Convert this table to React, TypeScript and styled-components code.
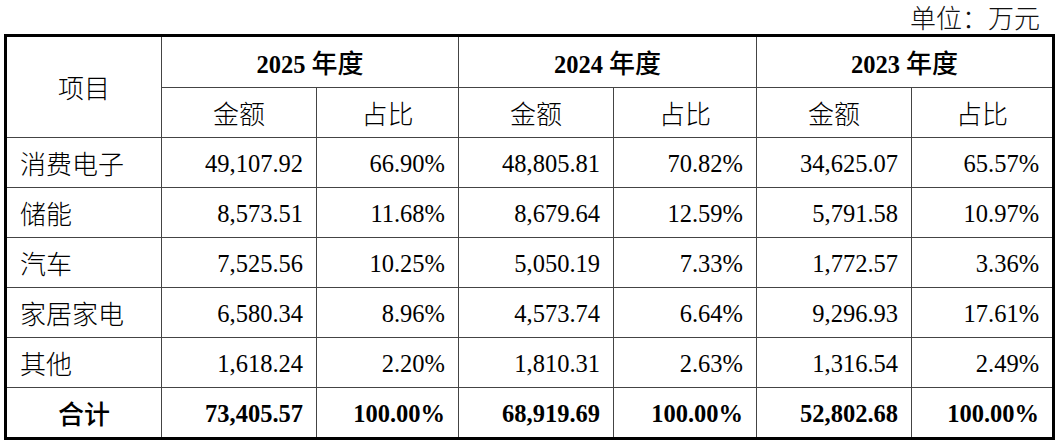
import React from "react";
import styled, { createGlobalStyle } from "styled-components";

const GlobalStyle = createGlobalStyle`
  html, body { margin: 0; padding: 0; background: #fff; }
  body { font-family: "Liberation Serif", "Noto Sans CJK SC", serif; color: #000; }
`;

const Page = styled.div`
  width: 1059px;
  display: flex;
  flex-direction: column;
`;

const Unit = styled.div`
  height: 34px;
  line-height: 34px;
  text-align: right;
  padding-right: 19px;
  font-size: 25px;
  color: #111;
`;

const Table = styled.table`
  margin-left: 4px;
  width: 1051px;
  table-layout: fixed;
  border-collapse: collapse;
  border: 3px solid #000;
  font-size: 24.5px;
  line-height: 30px;
`;

const Row = styled.tr<{ $h: number }>`
  height: ${(p) => p.$h}px;
`;

const Cell = styled.td<{ $align?: "left" | "center" | "right"; $bold?: boolean }>`
  border: 1px solid #444;
  padding: 3px 13px 0 13px;
  text-align: ${(p) => p.$align || "right"};
  font-weight: ${(p) => (p.$bold ? 700 : 400)};
  white-space: nowrap;
  overflow: hidden;
`;

const Cjk = styled.span<{ $bold?: boolean }>`
  font-family: "Noto Sans CJK SC", sans-serif;
  font-weight: ${(p) => (p.$bold ? 500 : 300)};
  font-size: 26px;
`;

const widths = [156, 155, 142, 155, 143, 155, 142];

const rows = [
  ["消费电子", "49,107.92", "66.90%", "48,805.81", "70.82%", "34,625.07", "65.57%"],
  ["储能", "8,573.51", "11.68%", "8,679.64", "12.59%", "5,791.58", "10.97%"],
  ["汽车", "7,525.56", "10.25%", "5,050.19", "7.33%", "1,772.57", "3.36%"],
  ["家居家电", "6,580.34", "8.96%", "4,573.74", "6.64%", "9,296.93", "17.61%"],
  ["其他", "1,618.24", "2.20%", "1,810.31", "2.63%", "1,316.54", "2.49%"],
];

const total = ["合计", "73,405.57", "100.00%", "68,919.69", "100.00%", "52,802.68", "100.00%"];

const years = ["2025", "2024", "2023"];

export default function App() {
  return (
    <Page>
      <GlobalStyle />
      <Unit>
        <Cjk>单位：万元</Cjk>
      </Unit>
      <Table>
        <colgroup>
          {widths.map((w, i) => (
            <col key={i} style={{ width: w }} />
          ))}
        </colgroup>
        <tbody>
          <Row $h={52}>
            <Cell rowSpan={2} $align="center">
              <Cjk>项目</Cjk>
            </Cell>
            {years.map((y) => (
              <Cell key={y} colSpan={2} $align="center" $bold>
                {y} <Cjk $bold>年度</Cjk>
              </Cell>
            ))}
          </Row>
          <Row $h={50}>
            {years.map((y) => (
              <React.Fragment key={y}>
                <Cell $align="center">
                  <Cjk>金额</Cjk>
                </Cell>
                <Cell $align="center">
                  <Cjk>占比</Cjk>
                </Cell>
              </React.Fragment>
            ))}
          </Row>
          {rows.map((r) => (
            <Row $h={50} key={r[0]}>
              <Cell $align="left">
                <Cjk>{r[0]}</Cjk>
              </Cell>
              {r.slice(1).map((v, i) => (
                <Cell key={i}>{v}</Cell>
              ))}
            </Row>
          ))}
          <Row $h={51}>
            <Cell $align="center">
              <Cjk $bold>{total[0]}</Cjk>
            </Cell>
            {total.slice(1).map((v, i) => (
              <Cell key={i} $bold>
                {v}
              </Cell>
            ))}
          </Row>
        </tbody>
      </Table>
    </Page>
  );
}
